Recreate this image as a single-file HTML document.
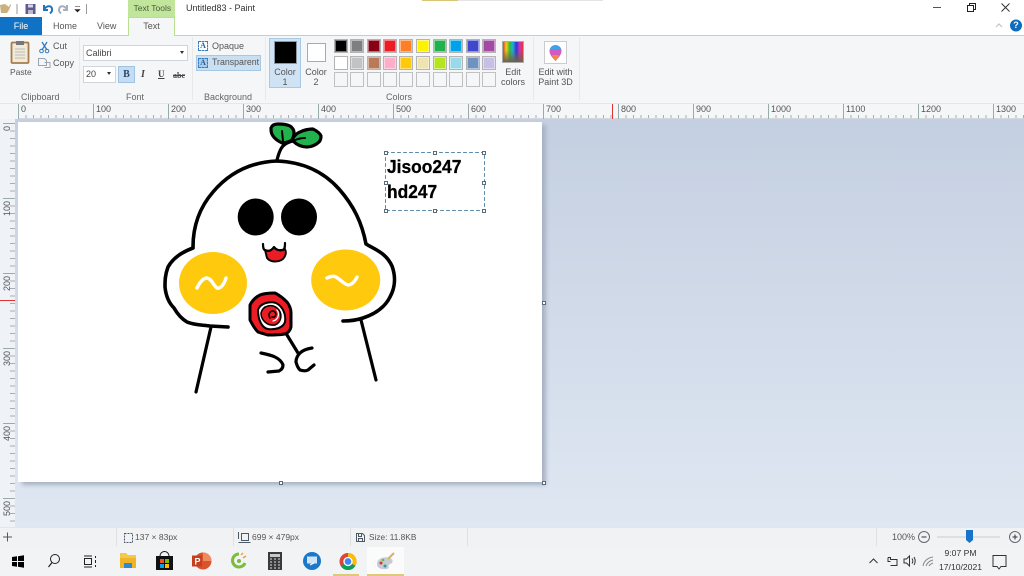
<!DOCTYPE html>
<html><head><meta charset="utf-8"><style>
html,body{margin:0;padding:0;width:1024px;height:576px;overflow:hidden;background:#fff}
body{position:relative;font-family:"Liberation Sans",sans-serif;font-size:9px;color:#444}
.a{position:absolute}
.t{position:absolute;white-space:nowrap;line-height:11px;font-size:9px;color:#555}
.c{text-align:center;transform:translateX(-50%)}
.s{position:absolute;width:14px;height:14px;box-sizing:border-box;border:1px solid #b4b4b4;box-shadow:inset 0 0 0 1px rgba(255,255,255,.45)}
.e{position:absolute;top:72px;width:14px;height:15px;box-sizing:border-box;border:1px solid #c0c0c0;background:#f5f6f7}
.h{position:absolute;width:4px;height:4px;box-sizing:border-box;border:1px solid #5a6b7c;background:#fff}
.r{position:absolute;top:104px;height:15px;border-left:1px solid #9aa;padding-left:2px;font-size:9px;line-height:11px;color:#555}
.v{position:absolute;left:3px;width:10px;height:14px;border-top:1px solid #9aa;}
.v span{position:absolute;left:0;top:2px;font-size:9px;line-height:9px;color:#555;writing-mode:vertical-rl;transform:rotate(180deg);white-space:nowrap}
</style></head><body>

<!-- title bar -->
<div class="a" style="left:0;top:0;width:1024px;height:36px;background:#fff"></div>
<div class="a" style="left:422px;top:0;width:36px;height:1px;background:#d9c777"></div>
<div class="a" style="left:458px;top:0;width:145px;height:1px;background:#e4e4e4"></div>
<svg class="a" style="left:0;top:0" width="100" height="17">
<path d="M0 5l5-1 4 3 1-3 1 1-2 5-2 3H1z" fill="#c9b07d"/><rect x="16.500" y="4" width="1" height="10" fill="#999"/>
<rect x="25.500" y="4" width="10" height="10" fill="#5e5a8c"/><rect x="28" y="4.500" width="5" height="3" fill="#d5d4e4"/><rect x="28" y="10" width="5" height="4" fill="#bdb9d3"/>
<path d="M44 5v5h4M44 9.500c3-5 9-4 8 1 0 1-1 2-2 3" fill="none" stroke="#1f74c0" stroke-width="2"/>
<path d="M67 5v5h-4M67 9.500c-3-5-8-4-8 1 0 1 1 2 2 3" fill="none" stroke="#a5b0ba" stroke-width="2"/>
<path d="M75 6.500h5M75 9.500h5l-2.500 2.500z" fill="#222" stroke="#222" stroke-width=".6"/><rect x="86" y="4" width="1" height="10" fill="#999"/>
</svg>
<div class="a" style="left:128px;top:0;width:47px;height:17px;background:#c0e59b"></div>
<div class="t" style="left:133.500px;top:3px;color:#4c5c3a;font-size:8.500px">Text Tools</div>
<div class="t" style="left:186px;top:3px;color:#333;font-size:9px">Untitled83 - Paint</div>

<svg class="a" style="left:930px;top:0" width="94" height="17">
<rect x="3" y="7" width="8" height="1" fill="#555"/>
<rect x="37.500" y="5.500" width="6" height="6" fill="none" stroke="#222"/><path d="M39.500 5.500v-2h6v6h-2" fill="none" stroke="#222"/>
<path d="M71.500 3.500l8 8M79.500 3.500l-8 8" stroke="#333" stroke-width="1"/>
</svg>
<svg class="a" style="left:990px;top:19px" width="34" height="17">
<path d="M6 8l3-3 3 3" fill="none" stroke="#c4c4c4" stroke-width="1.200"/>
<circle cx="26" cy="6.500" r="6" fill="#0f6cbd"/>
</svg>
<div class="a" style="left:1010px;top:20px;width:12px;text-align:center;color:#fff;font-size:9px;font-weight:bold;line-height:11px">?</div>

<!-- tabs -->
<div class="a" style="left:0;top:17px;width:42px;height:18px;background:#0f72c4;color:#fff;text-align:center;line-height:18px;font-size:9px">File</div>
<div class="t" style="left:53px;top:21px;color:#555">Home</div>
<div class="t" style="left:97px;top:21px;color:#555">View</div>
<div class="a" style="left:128px;top:17px;width:47px;height:19px;background:#f5f6f7;box-sizing:border-box;border:1px solid #b9e08f;border-bottom:none;text-align:center;line-height:17px;font-size:9px;color:#555">Text</div>

<!-- ribbon -->
<div class="a" style="left:0;top:35px;width:128px;height:1px;background:#b9e08f"></div>
<div class="a" style="left:175px;top:35px;width:849px;height:1px;background:#b9e08f"></div>
<div class="a" style="left:0;top:36px;width:1024px;height:67px;background:#f5f6f7"></div>
<div class="a" style="left:79px;top:37px;width:1px;height:63px;background:#e8e9eb"></div>
<div class="a" style="left:192px;top:37px;width:1px;height:63px;background:#e8e9eb"></div>
<div class="a" style="left:265px;top:37px;width:1px;height:63px;background:#e8e9eb"></div>
<div class="a" style="left:533px;top:37px;width:1px;height:63px;background:#e8e9eb"></div>
<div class="a" style="left:579px;top:37px;width:1px;height:63px;background:#e8e9eb"></div>

<!-- clipboard -->
<svg class="a" style="left:9px;top:40px" width="60" height="30">
<rect x="2.500" y="2.500" width="17" height="20.500" rx="1" fill="#f1ead8" stroke="#a67c4a" stroke-width="1.800"/>
<rect x="7" y="1" width="8" height="4" fill="#777"/>
<path d="M6 9h10M6 12h10M6 15h10M6 18h10" stroke="#b9b9b9"/>
<path d="M33 2l5 8M38 2l-5 8" stroke="#2f77bd" stroke-width="1.200"/><circle cx="32.500" cy="11" r="1.800" fill="none" stroke="#2f77bd"/><circle cx="38" cy="11" r="1.800" fill="none" stroke="#2f77bd"/>
<path d="M29.500 18.500h6l2 2v5h-8zM35.500 22.500h5.500v5h-5.500" fill="#f4f7fa" stroke="#9aa5b1"/>
</svg>
<div class="t" style="left:10px;top:67px;font-size:8.500px">Paste</div>
<div class="t" style="left:53px;top:41px">Cut</div>
<div class="t" style="left:53px;top:58px">Copy</div>
<div class="t" style="left:21px;top:92px;color:#666">Clipboard</div>

<!-- font -->
<div class="a" style="left:83px;top:45px;width:105px;height:16px;background:#fff;box-sizing:border-box;border:1px solid #cfd5da;line-height:14px;padding-left:2px;font-size:9px;color:#444">Calibri</div>
<div class="a" style="left:180px;top:51px;border:2.500px solid transparent;border-top:3px solid #333"></div>
<div class="a" style="left:83px;top:66px;width:33px;height:17px;background:#fff;box-sizing:border-box;border:1px solid #cfd5da;line-height:15px;padding-left:2px;font-size:9px;color:#444">20</div>
<div class="a" style="left:107px;top:72px;border:2.500px solid transparent;border-top:3px solid #333"></div>
<div class="a" style="left:118px;top:66px;width:17px;height:17px;background:#c5dcf2;box-sizing:border-box;border:1px solid #9fc3e3;text-align:center;font:bold 10px/15px 'Liberation Serif',serif;color:#264a6e">B</div>
<div class="t" style="left:141px;top:69px;font:italic bold 10px/11px 'Liberation Serif',serif;color:#444">I</div>
<div class="t" style="left:158px;top:69px;font:bold 9px/11px 'Liberation Serif',serif;color:#444;text-decoration:underline">U</div>
<div class="t" style="left:173px;top:70px;font:bold 8px/11px 'Liberation Serif',serif;color:#444;text-decoration:line-through">abc</div>
<div class="t" style="left:126px;top:92px;color:#666">Font</div>

<!-- background -->
<div class="a" style="left:196px;top:55px;width:65px;height:16px;background:#c9dff2;box-sizing:border-box;border:1px solid #a7c8e5"></div>
<div class="a" style="left:198px;top:41px;width:10px;height:10px;box-sizing:border-box;border:1px dashed #3a7fbf;background:#fff;color:#2a5f92;font:bold 8px/8px 'Liberation Serif',serif;text-align:center">A</div>
<div class="a" style="left:198px;top:58px;width:10px;height:10px;box-sizing:border-box;border:1px dashed #3a7fbf;background:#a9cdec;color:#2a5f92;font:bold 8px/8px 'Liberation Serif',serif;text-align:center">A</div>
<div class="t" style="left:212px;top:41px">Opaque</div>
<div class="t" style="left:212px;top:57px;font-size:8.800px">Transparent</div>
<div class="t" style="left:204px;top:92px;color:#666">Background</div>

<!-- colors -->
<div class="a" style="left:269px;top:38px;width:32px;height:50px;background:#cfe3f5;box-sizing:border-box;border:1px solid #a8c9e6"></div>
<div class="a" style="left:274px;top:41px;width:23px;height:23px;background:#000;box-sizing:border-box;border:1px solid #8a96a4"></div>
<div class="t c" style="left:285px;top:67px;line-height:10px;color:#555">Color<br>1</div>
<div class="a" style="left:307px;top:43px;width:19px;height:19px;background:#fff;box-sizing:border-box;border:1px solid #aaa"></div>
<div class="t c" style="left:316px;top:67px;line-height:10px;color:#555">Color<br>2</div>

<div class="s" style="left:334px;top:39px;background:#000"></div>
<div class="s" style="left:350px;top:39px;background:#7f7f7f"></div>
<div class="s" style="left:367px;top:39px;background:#880015"></div>
<div class="s" style="left:383px;top:39px;background:#ed1c24"></div>
<div class="s" style="left:399px;top:39px;background:#ff7f27"></div>
<div class="s" style="left:416px;top:39px;background:#fff200"></div>
<div class="s" style="left:433px;top:39px;background:#22b14c"></div>
<div class="s" style="left:449px;top:39px;background:#00a2e8"></div>
<div class="s" style="left:466px;top:39px;background:#3f48cc"></div>
<div class="s" style="left:482px;top:39px;background:#a349a4"></div>
<div class="s" style="left:334px;top:56px;background:#fff"></div>
<div class="s" style="left:350px;top:56px;background:#c3c3c3"></div>
<div class="s" style="left:367px;top:56px;background:#b97a57"></div>
<div class="s" style="left:383px;top:56px;background:#ffaec9"></div>
<div class="s" style="left:399px;top:56px;background:#ffc90e"></div>
<div class="s" style="left:416px;top:56px;background:#efe4b0"></div>
<div class="s" style="left:433px;top:56px;background:#b5e61d"></div>
<div class="s" style="left:449px;top:56px;background:#99d9ea"></div>
<div class="s" style="left:466px;top:56px;background:#7092be"></div>
<div class="s" style="left:482px;top:56px;background:#c8bfe7"></div>
<div class="e" style="left:334px"></div><div class="e" style="left:350px"></div><div class="e" style="left:367px"></div><div class="e" style="left:383px"></div><div class="e" style="left:399px"></div><div class="e" style="left:416px"></div><div class="e" style="left:433px"></div><div class="e" style="left:449px"></div><div class="e" style="left:466px"></div><div class="e" style="left:482px"></div>

<div class="a" style="left:502px;top:41px;width:22px;height:22px;box-sizing:border-box;border:1px solid #aaa;background:linear-gradient(to bottom,transparent 40%,#6f6248),linear-gradient(to right,#d42,#ec2,#3b3,#2ad,#33c,#c3b,#e33)"></div>
<div class="t c" style="left:513px;top:67px;line-height:10px;color:#555">Edit<br>colors</div>
<div class="t" style="left:386px;top:92px;color:#666">Colors</div>
<div class="a" style="left:544px;top:41px;width:23px;height:23px;background:#fff;box-sizing:border-box;border:1px solid #ccc"></div>
<svg class="a" style="left:544px;top:41px" width="23" height="23"><path d="M11.500 20c-4-4-6-7-6-10a6 6 0 0 1 12 0c0 3-2 6-6 10z" fill="#d45ac0"/><path d="M6 8a6 6 0 0 1 11 0z" fill="#35a7e8"/><path d="M11.500 20c-2-2-3-4-3.500-6h7c-.5 2-1.500 4-3.500 6z" fill="#f08a3c"/></svg>
<div class="t c" style="left:555.500px;top:67px;line-height:10px;color:#555">Edit with<br>Paint 3D</div>

<!-- workspace -->
<div class="a" style="left:0;top:119px;width:1024px;height:408px;background:linear-gradient(to bottom,#c4cfe1,#dfe7f2)"></div>

<!-- horizontal ruler -->
<div class="a" style="left:0;top:103px;width:1024px;height:16px;background:#f5f6f7;box-sizing:border-box;border-top:1px solid #e4e6e9"></div>
<div class="a" style="left:18px;top:115px;width:1006px;height:3px;background:repeating-linear-gradient(to right,#a5aeb8 0,#a5aeb8 1px,transparent 1px,transparent 7.500px)"></div>
<div class="a" style="left:18px;top:118px;width:1006px;height:1px;background:#d4d9df"></div>
<div class="r" style="left:18px">0</div><div class="r" style="left:93px">100</div><div class="r" style="left:168px">200</div><div class="r" style="left:243px">300</div><div class="r" style="left:318px">400</div><div class="r" style="left:393px">500</div><div class="r" style="left:468px">600</div><div class="r" style="left:543px">700</div><div class="r" style="left:618px">800</div><div class="r" style="left:693px">900</div><div class="r" style="left:768px">1000</div><div class="r" style="left:843px">1100</div><div class="r" style="left:918px">1200</div><div class="r" style="left:993px">1300</div>
<div class="a" style="left:612px;top:104px;width:1px;height:15px;background:#d33"></div>

<!-- vertical ruler -->
<div class="a" style="left:0;top:119px;width:15px;height:408px;background:#eff2f6"></div>
<div class="a" style="left:10px;top:123px;width:5px;height:404px;background:repeating-linear-gradient(to bottom,#a5aeb8 0,#a5aeb8 1px,transparent 1px,transparent 7.500px)"></div>
<div class="v" style="top:123px"><span>0</span></div>
<div class="v" style="top:198px"><span>100</span></div>
<div class="v" style="top:272.500px"><span>200</span></div>
<div class="v" style="top:347.500px"><span>300</span></div>
<div class="v" style="top:422.500px"><span>400</span></div>
<div class="v" style="top:497.500px"><span>500</span></div>
<div class="a" style="left:0;top:300px;width:15px;height:1px;background:#d33"></div>

<!-- canvas -->
<div class="a" style="left:18px;top:122px;width:524px;height:360px;background:#fff;box-shadow:4px 3px 4px #a8b2c4"></div>
<div class="h" style="left:279px;top:481px"></div>
<div class="h" style="left:542px;top:301px"></div>
<div class="h" style="left:542px;top:481px"></div>

<svg class="a" style="left:0;top:0" width="1024" height="576" fill="none" stroke="#000" stroke-linecap="round" stroke-linejoin="round">
<!-- body -->
<path d="M193 247C193 225 200 207 213 192C230 172 252 162 277 161C302 162 323 171 339 189C354 206 362 223 366 244C376 250 386 253 392 266C396 277 395 288 390 297C385 307 375 314 363 318C357 320 350 321 343 321" stroke-width="3.600"/>
<path d="M193 248C182 252 173 258 168 267C165 275 165 281 165 287C166 297 169 303 174 308C178 315 182 319 187 322C194 325 202 325 210 326L228 327" stroke-width="3.600"/>
<path d="M211 327L196 392M361 320L376 380" stroke-width="3.200"/>
<!-- stem + leaves -->
<path d="M277 160C279 152 281 148 283 146C286 143 289 142 293 141" stroke-width="3.200"/>
<path d="M271 128C272 125 275 124 278 124C284 124 288 125 290 126C293 128 294 131 294 133C294 136 293 138 292 140C289 142 285 143 282 143C278 141 275 139 273 136C271 133 271 131 271 128Z" fill="#22b14c" stroke-width="3.200"/>
<path d="M293 138C295 135 297 133 300 132C304 130 309 129 313 129C317 131 320 133 321 136C321 139 320 141 319 142C316 145 311 147 307 147C302 147 297 145 293 141Z" fill="#22b14c" stroke-width="3.200"/>
<path d="M282 131L283 141M293 141C297 139 301 138 305 138" stroke-width="2"/>
<!-- eyes -->
<ellipse cx="255.700" cy="217" rx="18" ry="18.500" fill="#000" stroke="none"/>
<ellipse cx="299" cy="217" rx="18" ry="18.500" fill="#000" stroke="none"/>
<!-- mouth -->
<path d="M265 250C269 252 272 250 274 247C276 250 280 251 285 249C287 253 285 257 283 259C279 262 271 263 267 258Z" fill="#ed1c24" stroke-width="1.900"/>
<path d="M263 244C263 248 264 250 265 250C269 252 272 250 274 247C276 250 280 251 283 250C285 249 285 246 285 243" stroke-width="2.200"/>
<!-- cheeks -->
<ellipse cx="213" cy="283" rx="34" ry="31" fill="#ffc90e" stroke="none"/>
<ellipse cx="345.700" cy="280" rx="34.500" ry="30.500" fill="#ffc90e" stroke="none"/>
<path d="M197 288C200 282 203 278 207 278C212 279 213 285 217 288C220 289 224 285 226 278" stroke="#fff" stroke-width="3.400"/>
<path d="M327 278C331 276 333 276 336 277C341 280 344 284 348 285C352 285 355 281 357 277" stroke="#fff" stroke-width="3.400"/>
<!-- lollipop -->
<path d="M260 295C265 293 270 293 275 293C281 296 284 299 287 302C290 306 291 310 291 313L291 327C290 331 288 333 285 334C279 335 273 335 268 335C264 334 261 333 258 332C254 328 252 324 250 320C250 315 250 310 250 305C252 301 256 297 260 295Z" fill="#ed1c24" stroke-width="3"/>
<path d="M258 310C260 303 270 301 276 303C284 307 286 316 285 322C283 328 275 330 268 329C262 328 258 320 258 310Z" fill="#fff" stroke-width="2"/>
<path d="M261 313C263 305 272 304 277 308C283 313 282 322 275 325C268 326 261 321 261 313Z" fill="#ed1c24" stroke-width="1.500"/>
<path d="M270 318C267 313 272 309 275 312C277 315 275 318 272 317" stroke-width="1.600"/>
<path d="M273 321C278 320 280 314 277 310" stroke="#fff" stroke-width="1.300"/>
<path d="M287 335L298 353" stroke-width="3.200"/>
<path d="M312 348C306 349 302 351 300 353C297 356 296 359 296 362C297 366 298 368 300 370C303 371 306 371 308 370L314 365" stroke-width="3.200"/>
<path d="M261 353C266 354 271 355 275 357C279 359 282 362 283 365C283 368 281 370 279 371L268 372" stroke-width="3.200"/>
<!-- selection -->
<rect x="385.500" y="152.500" width="99" height="58" stroke="#5a8aa8" stroke-width="1" stroke-dasharray="3 3"/>
</svg>
<div class="h" style="left:384px;top:151px"></div><div class="h" style="left:433px;top:151px"></div><div class="h" style="left:482px;top:151px"></div>
<div class="h" style="left:384px;top:181px"></div><div class="h" style="left:482px;top:181px"></div>
<div class="h" style="left:384px;top:209px"></div><div class="h" style="left:433px;top:209px"></div><div class="h" style="left:482px;top:209px"></div>
<div class="a" style="left:387px;top:154.500px;font:bold 18px/25px 'Liberation Sans',sans-serif;color:#000;white-space:nowrap;transform:scaleX(.965);transform-origin:0 0;-webkit-text-stroke:.3px #000">Jisoo247<br>hd247</div>

<!-- status bar -->
<div class="a" style="left:0;top:527px;width:1024px;height:20px;background:#f1f2f4;border-top:1px solid #e3e5e8;box-sizing:border-box"></div>
<div class="a" style="left:116px;top:528px;width:1px;height:18px;background:#dcdfe3"></div>
<div class="a" style="left:233px;top:528px;width:1px;height:18px;background:#dcdfe3"></div>
<div class="a" style="left:350px;top:528px;width:1px;height:18px;background:#dcdfe3"></div>
<div class="a" style="left:467px;top:528px;width:1px;height:18px;background:#dcdfe3"></div>
<div class="a" style="left:876px;top:528px;width:1px;height:18px;background:#dcdfe3"></div>
<svg class="a" style="left:0;top:527px" width="380" height="20" fill="none" stroke="#4d5a66">
<path d="M3 10h9M7.500 5.500v9" stroke-width="1"/>
<rect x="124.500" y="6.500" width="8" height="9" stroke-dasharray="2 1"/>
<path d="M238.500 5v7M241.500 6.500h7v7h-7zM238.500 15.500h12"/>
<path d="M356.500 6.500h6l2 2v6h-8z"/><rect x="358.500" y="6.500" width="3" height="3"/><rect x="358.500" y="11.500" width="4" height="3"/>
</svg>
<div class="t" style="left:135px;top:532px;color:#555;font-size:8.500px">137 × 83px</div>
<div class="t" style="left:252px;top:532px;color:#555;font-size:8.500px">699 × 479px</div>
<div class="t" style="left:369px;top:532px;color:#555;font-size:8.300px">Size: 11.8KB</div>
<div class="t" style="left:892px;top:532px;color:#555">100%</div>
<svg class="a" style="left:915px;top:528px" width="109" height="18" fill="none" stroke="#667">
<circle cx="9" cy="9" r="5.500"/><path d="M6.500 9h5" stroke="#333"/>
<path d="M22 9h63" stroke="#d4d9de" stroke-width="1.500"/>
<path d="M51 2h7v10l-3.500 3-3.500-3z" fill="#1874c8" stroke="none"/>
<circle cx="100" cy="9" r="5.500"/><path d="M97.500 9h5M100 6.500v5" stroke="#333"/>
</svg>

<!-- taskbar -->
<div class="a" style="left:0;top:547px;width:1024px;height:29px;background:#f1f3f5"></div>
<div class="a" style="left:367px;top:547px;width:37px;height:27px;background:#fbfbfc"></div>
<div class="a" style="left:333px;top:574px;width:26px;height:2px;background:#e0c87a"></div>
<div class="a" style="left:367px;top:574px;width:37px;height:2px;background:#e0c87a"></div>
<svg class="a" style="left:0;top:547px" width="410" height="29">
<path d="M12 10l5-.7v4.700h-5zM18 9.200l6-.9v5.700h-6zM12 15h5v4.700l-5-.7zM18 15h6v5.700l-6-.9z" fill="#000"/>
<circle cx="55" cy="12" r="4.500" fill="none" stroke="#222" stroke-width="1"/><path d="M52 15.500l-3.500 4.500" stroke="#222" stroke-width="1.200"/>
<path d="M84 9h8M84 20h8" stroke="#222"/><rect x="84.500" y="11.500" width="7" height="6" fill="none" stroke="#222"/><path d="M95.500 9v2M95.500 13v3M95.500 18v2" stroke="#222"/>
<path d="M120 6h6l2 2h8v13h-16z" fill="#f5c84a"/><rect x="120" y="11" width="16" height="10" fill="#f0b429"/><rect x="124" y="16" width="8" height="5" fill="#2d8ad0"/>
<path d="M160 9a4.500 4.500 0 0 1 9 0" fill="none" stroke="#111"/><rect x="156" y="9" width="17" height="14" fill="#111"/><rect x="160" y="12" width="4" height="4" fill="#f25022"/><rect x="165" y="12" width="4" height="4" fill="#7fba00"/><rect x="160" y="17" width="4" height="4" fill="#00a4ef"/><rect x="165" y="17" width="4" height="4" fill="#ffb900"/>
<circle cx="203" cy="14" r="8.500" fill="#d9532c"/><path d="M203 5.500a8.500 8.500 0 0 1 8.500 8.500h-8.500z" fill="#ef8a5e"/><rect x="192" y="8.500" width="10" height="11" fill="#c4401f"/><text x="194.500" y="17.500" font-family="Liberation Sans" font-size="9" font-weight="bold" fill="#fff">P</text>
<path d="M239 7a6.500 6.500 0 1 0 6 9" fill="none" stroke="#7dbb3c" stroke-width="3"/><circle cx="239" cy="14" r="2" fill="#7dbb3c"/><path d="M241 8l2-2M243 11l3-2" stroke="#f0a030" stroke-width="1.500"/>
<rect x="268" y="5" width="14" height="18" fill="#3a3a3a"/><rect x="270" y="7" width="10" height="3" fill="#c9c9c9"/><path d="M270 12h2M274 12h2M278 12h2M270 15h2M274 15h2M278 15h2M270 18h2M274 18h2M278 18h2M270 21h2M274 21h2M278 21h2" stroke="#ddd"/>
<circle cx="312" cy="14" r="9" fill="#1a78c8"/><rect x="307" y="9.500" width="10" height="7" fill="#cfe5f7"/><path d="M310 18l4-2" stroke="#fff"/>
<circle cx="348" cy="14.500" r="8.500" fill="#db4437"/><path d="M348 14.500l7.400 4.200a8.500 8.500 0 0 1-14.800 0z" fill="#0f9d58"/><path d="M348 6a8.500 8.500 0 0 1 7.400 12.700l-7.400-4.200z" fill="#fbbc05"/><circle cx="348" cy="14.500" r="4" fill="#4285f4" stroke="#fff" stroke-width="1.300"/>
<path d="M377 17c0-6 8-8 13-6 4 2 3 5 0 6-2 1-2 3-1 4-3 2-12 2-12-4z" fill="#c5ccd3"/><path d="M388 12l6-6" stroke="#d9b25a" stroke-width="2"/><circle cx="381" cy="16" r="1.500" fill="#d33"/><circle cx="385" cy="19" r="1.500" fill="#39a"/><circle cx="383" cy="13" r="1.300" fill="#6b4"/>
</svg>
<svg class="a" style="left:860px;top:550px" width="160" height="24" fill="none" stroke="#333">
<path d="M9.500 13l4-4 4 4"/>
<path d="M28 7.500h2.500v2h6.500v6h-6.500M28 7.500v4h2.500"/>
<path d="M44 9h2.500l3-3v10l-3-3h-2.500zM52 8.500c1 1.500 1 3.500 0 5M54 7c1.500 2.500 1.500 5.500 0 8" />
<path d="M63 16c1-5 4-8 10-9M66 16c1-3 3-5 7-6M69 16c1-2 2-2 4-3" stroke="#888"/>
<path d="M133 5.500h13v11h-5l-2 2.500-2-2.500h-4z" stroke-width="1"/>
</svg>
<div class="t c" style="left:960.500px;top:547px;color:#333;line-height:13.500px;font-size:8.600px">9:07 PM<br>17/10/2021</div>
</body></html>
